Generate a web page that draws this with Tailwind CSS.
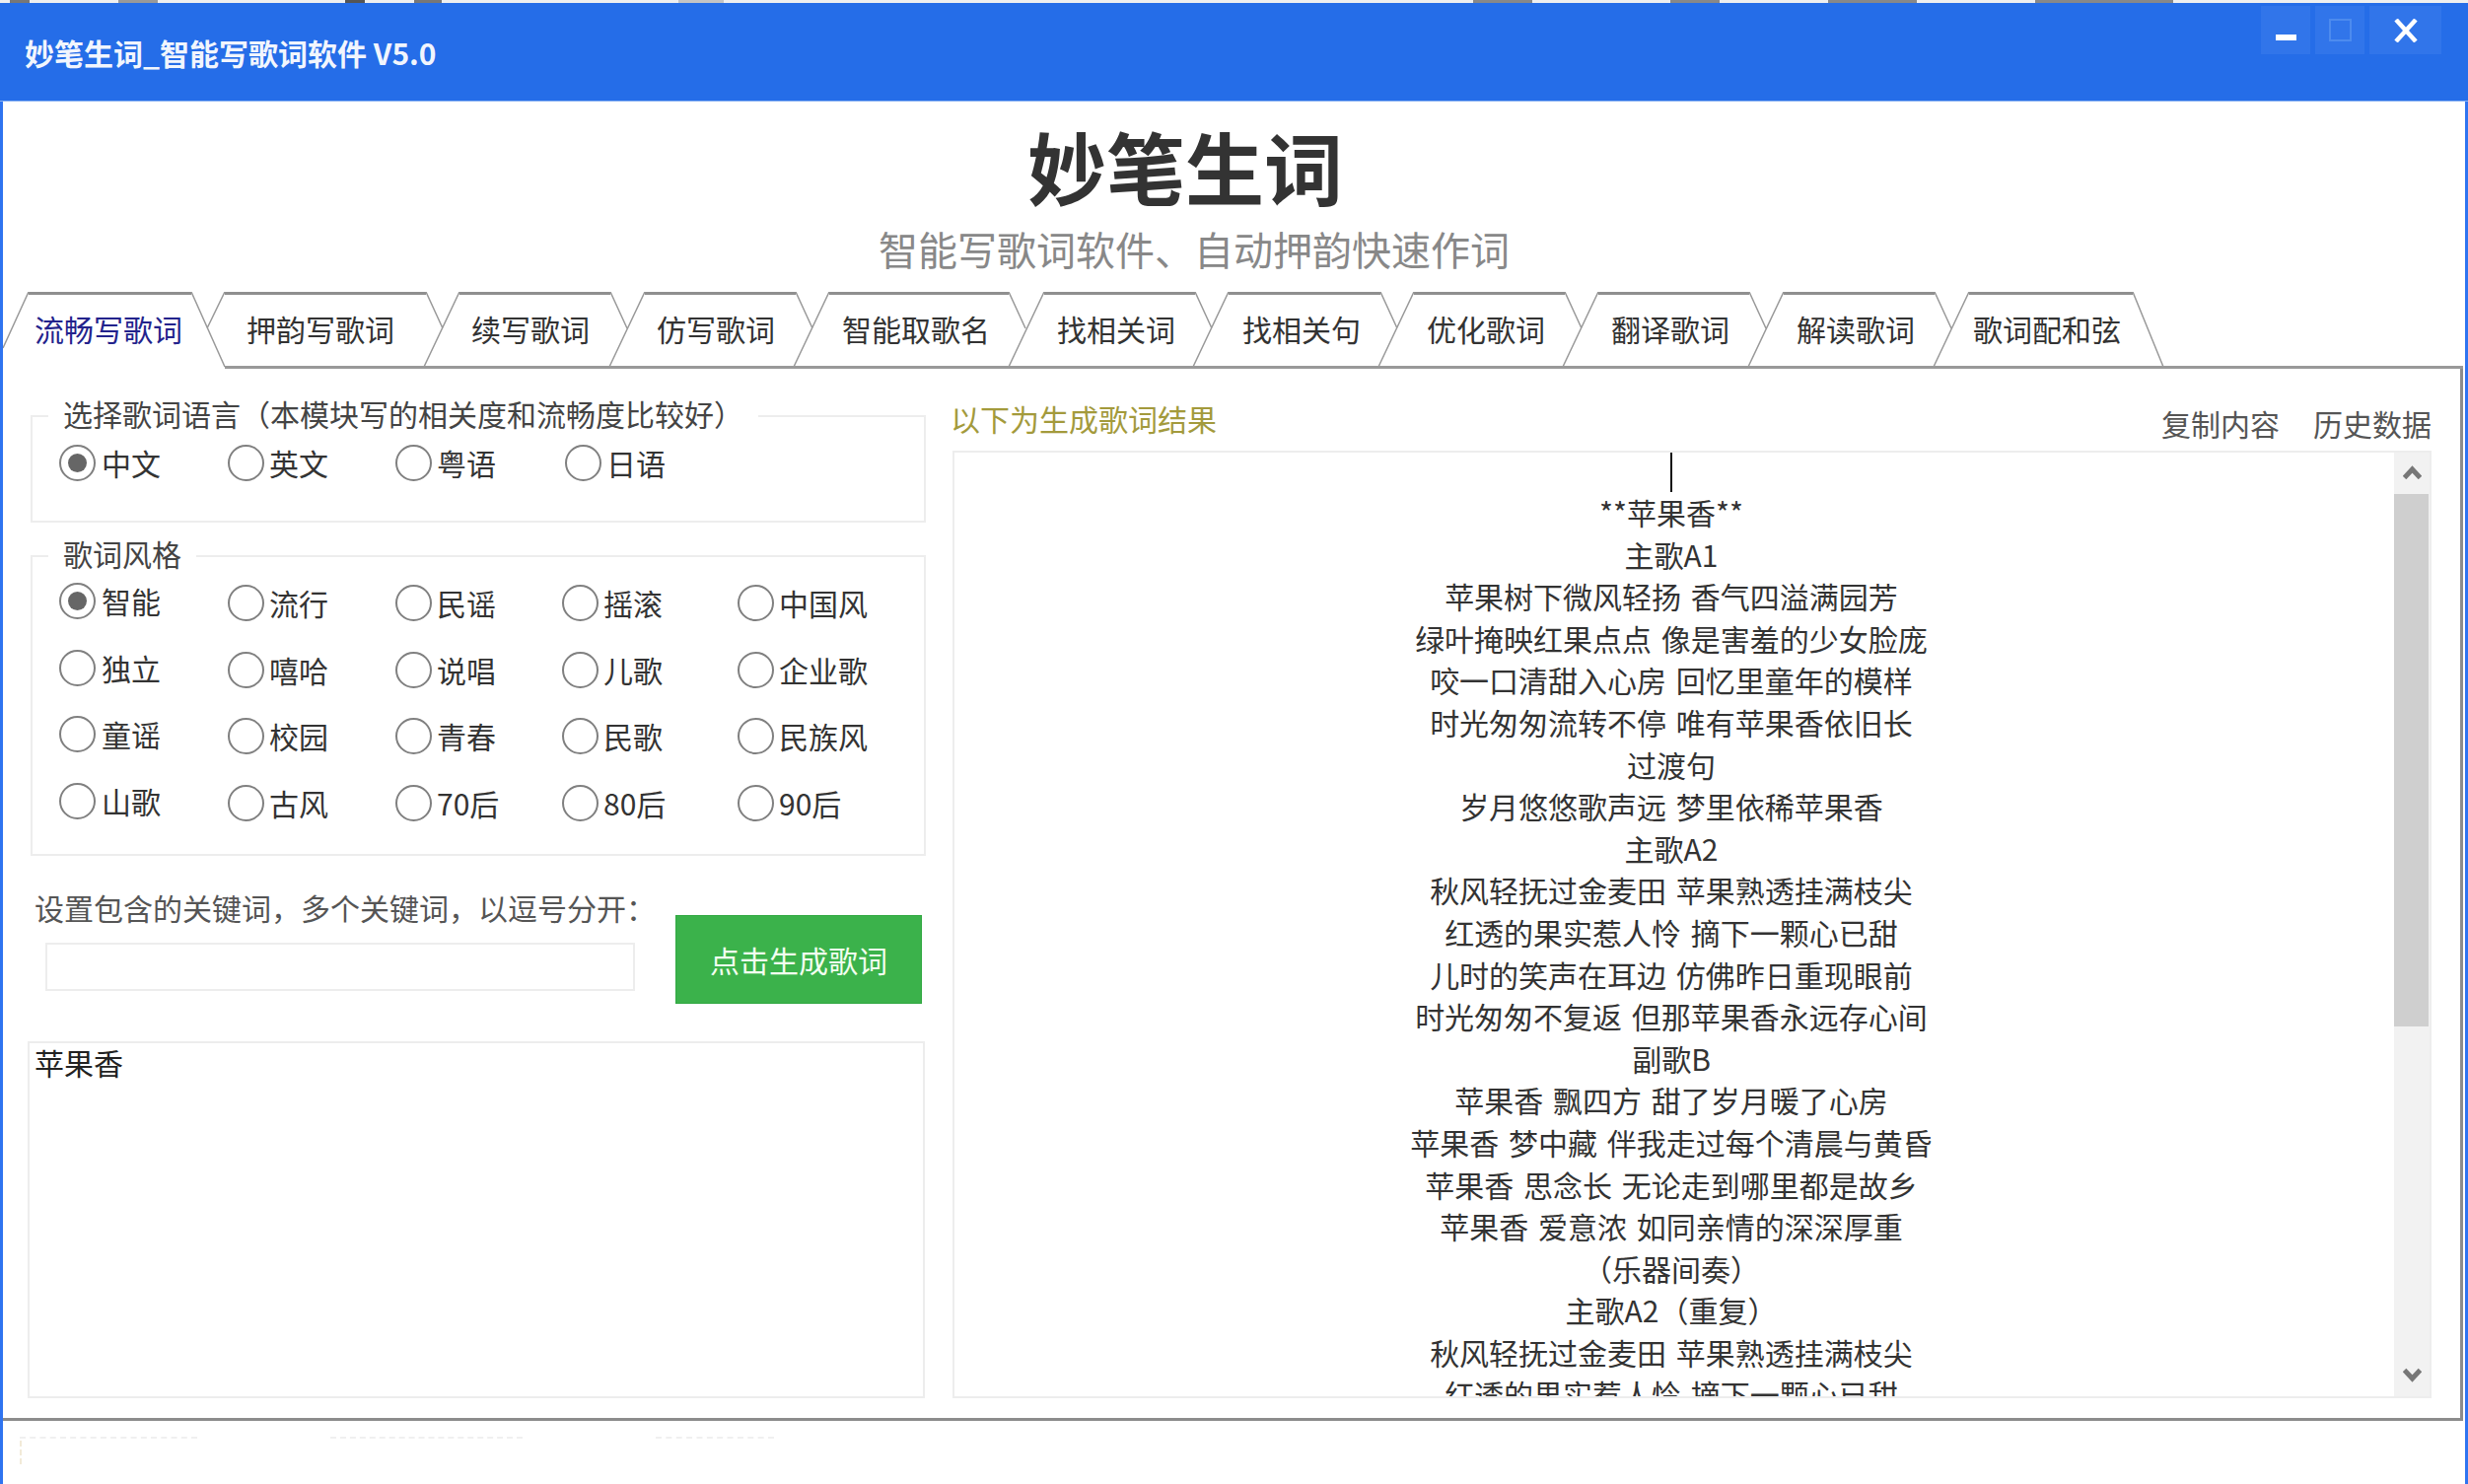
<!DOCTYPE html>
<html lang="zh-CN">

<head>
    <meta charset="UTF-8">
    <title>妙笔生词</title>
    <script src="https://cdn.jsdelivr.net/npm/@tailwindcss/browser@4"></script>
</head>

<body class="w-[2503px] h-[1505px] overflow-hidden bg-white text-[30px] text-[#333] font-['Noto_Sans_CJK_SC','Noto_Sans',sans-serif]">

    <!-- what is left of the window behind -->
    <div class="flex h-[3px] bg-[#efefef]">
        <span class="ml-[10px] w-[20px] bg-[#777]"></span>
        <span class="ml-[90px] w-[40px] bg-[#999]"></span>
        <span class="ml-[190px] w-[20px] bg-[#555]"></span>
        <span class="ml-[50px] w-[28px] bg-[#777]"></span>
        <span class="ml-[240px] w-[46px] bg-[#c4c4c4]"></span>
        <span class="ml-[760px] w-[60px] bg-[#888]"></span>
        <span class="ml-[140px] w-[50px] bg-[#888]"></span>
        <span class="ml-[110px] w-[90px] bg-[#888]"></span>
        <span class="ml-[120px] w-[140px] bg-[#888]"></span>
    </div>

    <!-- title bar -->
    <div class="flex justify-between h-[100px] bg-[#256de8] border-b border-[#8ab2f2]">
        <div class="pl-[25px] pt-[32px] leading-[36px] font-bold text-white/95">妙笔生词_智能写歌词软件 V5.0</div>
        <div class="flex gap-[5px] pt-[3px] pr-[27px]">
            <div class="flex items-end justify-center w-[50px] h-[49px] pb-[14px] bg-[#3175ea]">
                <div class="w-[21px] h-[6px] bg-white"></div>
            </div>
            <div class="flex items-center justify-center w-[50px] h-[49px] bg-[#3175ea]">
                <div class="w-[23px] h-[23px] border-2 border-[#4d8bee]"></div>
            </div>
            <div class="flex items-center justify-center w-[73px] h-[49px] bg-[#3175ea]">
                <svg width="24" height="24" viewBox="0 0 24 24" fill="none" stroke="#fff" stroke-width="4.5">
                    <path d="M2 1 L22 23 M22 1 L2 23" />
                </svg>
            </div>
        </div>
    </div>

    <div class="h-[1402px] border-x-[3px] border-[#2f74f0]">

        <!-- header -->
        <div class="h-[193px] pt-[24px]">
            <h1 class="ml-[1039px] text-[80px] leading-[80px] font-bold text-[#333]">妙笔生词</h1>
            <p class="ml-[888px] mt-[25px] text-[40px] leading-[40px] text-[#888]">智能写歌词软件、自动押韵快速作词</p>
        </div>

        <!-- tabs -->
        <div class="relative h-[78px]">
            <svg class="absolute top-0 left-0" width="2497" height="78" viewBox="3 296 2497 78" fill="none" stroke="#999" stroke-width="1.5">
                <path stroke-width="3" stroke="#8f8f8f" d="M29 297.5H194 M228 297.5H432 M466 297.5H619 M654 297.5H807 M841 297.5H1023 M1059 297.5H1212 M1246 297.5H1400 M1434 297.5H1587 M1621 297.5H1774 M1809 297.5H1962 M1997 297.5H2163" />
                <path stroke-width="3" d="M228 372.5H2498" />
                <path d="M29 296L3 353 M194 296L228 372 M228 296L210 333 M432 296L449 333 M466 296L430 372 M619 296L636 333 M654 296L618 372 M807 296L824 333 M841 296L805 372 M1023 296L1040 333 M1059 296L1023 372 M1212 296L1229 333 M1246 296L1210 372 M1400 296L1417 333 M1434 296L1398 372 M1587 296L1604 333 M1621 296L1585 372 M1774 296L1791 333 M1809 296L1773 372 M1962 296L1979 333 M1997 296L1961 372 M2163 296L2194 372" />
            </svg>
            <div class="relative flex gap-[68px] pl-[32px] h-[73px] items-center leading-[36px] whitespace-nowrap">
                <span class="text-[#23238c]">流畅写歌词</span>
                <span class="-ml-[3px]">押韵写歌词</span>
                <span class="ml-[10px]">续写歌词</span>
                <span>仿写歌词</span>
                <span>智能取歌名</span>
                <span>找相关词</span>
                <span>找相关句</span>
                <span class="-ml-[1px]">优化歌词</span>
                <span class="-ml-[1px]">翻译歌词</span>
                <span>解读歌词</span>
                <span class="-ml-[9px]">歌词配和弦</span>
            </div>
        </div>

        <!-- tab body -->
        <div class="flex h-[1067px] mr-[2px] border-r-[3px] border-b-[3px] border-[#8c8c8c]">

            <!-- left column -->
            <div class="w-[938px] pl-[25px] shrink-0">

                <div class="relative w-[908px] h-[109px] ml-[3px] mt-[47px] pl-[27px] pt-[28px] border-2 border-[#ededed]">
                    <span class="absolute -top-[26px] left-[16px] px-[15px] bg-white leading-[44px] whitespace-nowrap text-[#444]">选择歌词语言（本模块写的相关度和流畅度比较好）</span>
                    <div class="grid grid-cols-[171px_170px_172px_1fr]">
                        <label class="flex items-start gap-[6px]"><span class="flex items-center justify-center w-[37px] h-[37px] rounded-full border-2 border-[#808080]"><span class="w-[19px] h-[19px] rounded-full bg-[#666]"></span></span><span class="leading-[37px]">中文</span></label>
                        <label class="flex items-start gap-[5px]"><span class="w-[37px] h-[37px] rounded-full border-2 border-[#808080]"></span><span class="leading-[37px]">英文</span></label>
                        <label class="flex items-start gap-[5px]"><span class="w-[37px] h-[37px] rounded-full border-2 border-[#808080]"></span><span class="leading-[37px]">粤语</span></label>
                        <label class="flex items-start gap-[5px]"><span class="w-[37px] h-[37px] rounded-full border-2 border-[#808080]"></span><span class="leading-[37px]">日语</span></label>
                    </div>
                </div>

                <div class="relative w-[908px] h-[305px] ml-[3px] mt-[33px] pl-[27px] pt-[28px] border-2 border-[#ededed]">
                    <span class="absolute -top-[26px] left-[16px] px-[15px] bg-white leading-[44px] whitespace-nowrap text-[#444]">歌词风格</span>
                    <div class="grid grid-cols-[171px_170px_169px_178px_1fr] auto-rows-[67.5px]">
                        <label class="flex items-start gap-[6px] -mt-[2px]"><span class="flex items-center justify-center w-[37px] h-[37px] rounded-full border-2 border-[#808080]"><span class="w-[19px] h-[19px] rounded-full bg-[#666]"></span></span><span class="leading-[37px]">智能</span></label>
                        <label class="flex items-start gap-[5px]"><span class="w-[37px] h-[37px] rounded-full border-2 border-[#808080]"></span><span class="leading-[37px]">流行</span></label>
                        <label class="flex items-start gap-[5px]"><span class="w-[37px] h-[37px] rounded-full border-2 border-[#808080]"></span><span class="leading-[37px]">民谣</span></label>
                        <label class="flex items-start gap-[5px]"><span class="w-[37px] h-[37px] rounded-full border-2 border-[#808080]"></span><span class="leading-[37px]">摇滚</span></label>
                        <label class="flex items-start gap-[5px]"><span class="w-[37px] h-[37px] rounded-full border-2 border-[#808080]"></span><span class="leading-[37px]">中国风</span></label>

                        <label class="flex items-start gap-[6px] -mt-[2px]"><span class="w-[37px] h-[37px] rounded-full border-2 border-[#808080]"></span><span class="leading-[37px]">独立</span></label>
                        <label class="flex items-start gap-[5px]"><span class="w-[37px] h-[37px] rounded-full border-2 border-[#808080]"></span><span class="leading-[37px]">嘻哈</span></label>
                        <label class="flex items-start gap-[5px]"><span class="w-[37px] h-[37px] rounded-full border-2 border-[#808080]"></span><span class="leading-[37px]">说唱</span></label>
                        <label class="flex items-start gap-[5px]"><span class="w-[37px] h-[37px] rounded-full border-2 border-[#808080]"></span><span class="leading-[37px]">儿歌</span></label>
                        <label class="flex items-start gap-[5px]"><span class="w-[37px] h-[37px] rounded-full border-2 border-[#808080]"></span><span class="leading-[37px]">企业歌</span></label>

                        <label class="flex items-start gap-[6px] -mt-[2px]"><span class="w-[37px] h-[37px] rounded-full border-2 border-[#808080]"></span><span class="leading-[37px]">童谣</span></label>
                        <label class="flex items-start gap-[5px]"><span class="w-[37px] h-[37px] rounded-full border-2 border-[#808080]"></span><span class="leading-[37px]">校园</span></label>
                        <label class="flex items-start gap-[5px]"><span class="w-[37px] h-[37px] rounded-full border-2 border-[#808080]"></span><span class="leading-[37px]">青春</span></label>
                        <label class="flex items-start gap-[5px]"><span class="w-[37px] h-[37px] rounded-full border-2 border-[#808080]"></span><span class="leading-[37px]">民歌</span></label>
                        <label class="flex items-start gap-[5px]"><span class="w-[37px] h-[37px] rounded-full border-2 border-[#808080]"></span><span class="leading-[37px]">民族风</span></label>

                        <label class="flex items-start gap-[6px] -mt-[2px]"><span class="w-[37px] h-[37px] rounded-full border-2 border-[#808080]"></span><span class="leading-[37px]">山歌</span></label>
                        <label class="flex items-start gap-[5px]"><span class="w-[37px] h-[37px] rounded-full border-2 border-[#808080]"></span><span class="leading-[37px]">古风</span></label>
                        <label class="flex items-start gap-[5px]"><span class="w-[37px] h-[37px] rounded-full border-2 border-[#808080]"></span><span class="leading-[37px]">70后</span></label>
                        <label class="flex items-start gap-[5px]"><span class="w-[37px] h-[37px] rounded-full border-2 border-[#808080]"></span><span class="leading-[37px]">80后</span></label>
                        <label class="flex items-start gap-[5px]"><span class="w-[37px] h-[37px] rounded-full border-2 border-[#808080]"></span><span class="leading-[37px]">90后</span></label>
                    </div>
                </div>

                <!-- keywords and the generate button -->
                <div class="flex mt-[37px]">
                    <div class="w-[657px] pl-[7px]">
                        <div class="leading-[30px] whitespace-nowrap text-[#555]">设置包含的关键词，多个关键词，以逗号分开：</div>
                        <div class="w-[598px] h-[49px] ml-[11px] mt-[21px] border-2 border-[#ededed]"></div>
                    </div>
                    <div class="flex items-center justify-center w-[250px] h-[90px] mt-[23px] bg-[#3bb24b] border border-[#31a842] text-[#f2fff0]">点击生成歌词</div>
                </div>

                <div class="w-[910px] h-[362px] mt-[38px] pl-[5px] pt-[4px] border-2 border-[#ededed] leading-[30px] text-[#222]">苹果香</div>
            </div>

            <!-- right column -->
            <div class="w-[1502px] ml-[23px]">
                <div class="flex justify-between h-[83px]">
                    <div class="mt-[35px] leading-[30px] text-[#a39a3c]">以下为生成歌词结果</div>
                    <div class="flex gap-[34px] mt-[40px] leading-[30px] text-[#555]">
                        <span>复制内容</span>
                        <span>历史数据</span>
                    </div>
                </div>

                <div class="flex w-[1500px] h-[961px] ml-[2px] border-2 border-[#ededed] overflow-hidden">
                    <div class="flex-1 min-w-0 pr-[6px] overflow-hidden text-center leading-[42.6px] text-[#333] [word-spacing:3px]">
                        <div class="w-[2px] h-[40px] mx-auto bg-[#111]"></div>
                        <div class="-mt-[1px]">**苹果香**</div>
                        <div>主歌A1</div>
                        <div>苹果树下微风轻扬 香气四溢满园芳</div>
                        <div>绿叶掩映红果点点 像是害羞的少女脸庞</div>
                        <div>咬一口清甜入心房 回忆里童年的模样</div>
                        <div>时光匆匆流转不停 唯有苹果香依旧长</div>
                        <div>过渡句</div>
                        <div>岁月悠悠歌声远 梦里依稀苹果香</div>
                        <div>主歌A2</div>
                        <div>秋风轻抚过金麦田 苹果熟透挂满枝尖</div>
                        <div>红透的果实惹人怜 摘下一颗心已甜</div>
                        <div>儿时的笑声在耳边 仿佛昨日重现眼前</div>
                        <div>时光匆匆不复返 但那苹果香永远存心间</div>
                        <div>副歌B</div>
                        <div>苹果香 飘四方 甜了岁月暖了心房</div>
                        <div>苹果香 梦中藏 伴我走过每个清晨与黄昏</div>
                        <div>苹果香 思念长 无论走到哪里都是故乡</div>
                        <div>苹果香 爱意浓 如同亲情的深深厚重</div>
                        <div>（乐器间奏）</div>
                        <div>主歌A2（重复）</div>
                        <div>秋风轻抚过金麦田 苹果熟透挂满枝尖</div>
                        <div>红透的果实惹人怜 摘下一颗心已甜</div>
                    </div>
                    <!-- scrollbar -->
                    <div class="flex flex-col items-start w-[36px] bg-[#f2f2f2] shrink-0">
                        <svg class="ml-[9px] mt-[13px]" width="19" height="14" viewBox="0 0 19 14" fill="none" stroke="#777" stroke-width="5">
                            <path d="M1.5 12.5 L9.5 4 L17.5 12.5" />
                        </svg>
                        <div class="w-[35px] h-[540px] mt-[15px] bg-[#cfcfcf]"></div>
                        <svg class="ml-[9px] mt-auto mb-[13px]" width="19" height="17" viewBox="0 0 19 17" fill="none" stroke="#777" stroke-width="5">
                            <path d="M1.5 3.5 L9.5 12 L17.5 3.5" />
                        </svg>
                    </div>
                </div>
            </div>
        </div>

        <!-- cut off row under the tab body -->
        <div class="flex gap-[135px] pt-[16px] pl-[17px]">
            <div class="w-[180px] border-t-2 border-dashed border-[#f0f0f0]"></div>
            <div class="w-[195px] border-t-2 border-dashed border-[#f0f0f0]"></div>
            <div class="w-[120px] border-t-2 border-dashed border-[#f0f0f0]"></div>
        </div>
        <div class="w-0 h-[24px] ml-[17px] mt-[2px] border-l-2 border-dashed border-[#f2ead8]"></div>
    </div>
</body>

</html>
